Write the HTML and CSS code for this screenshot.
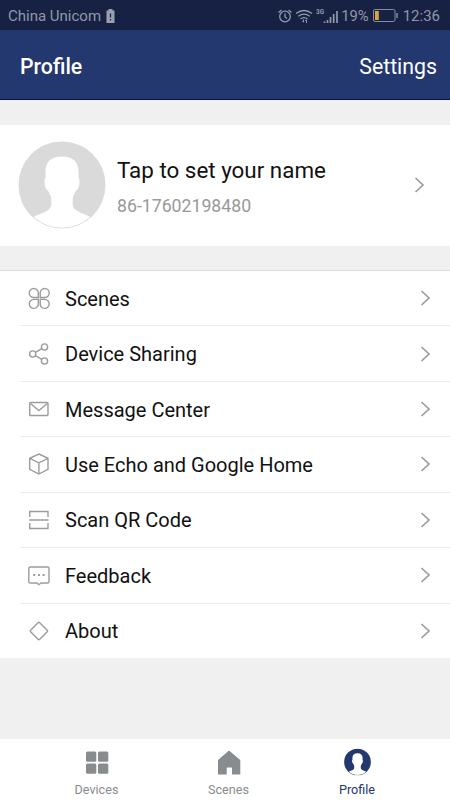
FILE: index.html
```html
<!DOCTYPE html>
<html lang="en">
<head>
  <meta charset="UTF-8">
  <meta name="viewport" content="width=device-width, initial-scale=1">
  <title>Profile</title>
  <link rel="stylesheet" href="styles.css">
</head>
<body>
  <!-- shared shapes -->
  <svg class="defs" width="0" height="0">
    <symbol id="person" viewBox="0 0 88 88">
      <circle cx="44" cy="44" r="43.5" fill="currentColor"/>
      <path fill="#fff" d="M44 15.500C33 15.500 28 21 27.500 29.500V37C25.500 38 26.500 48 30 49.500C31 52 33 55 33.300 57V63C33.300 71 22 72 15.800 76A42.700 42.700 0 0 0 72.200 76C66 72 54.700 71 54.700 63V57C55 55 57 52 58 49.500C61.500 48 62.500 38 60.500 37V29.500C60 21 55 15.500 44 15.500Z"/>
    </symbol>
    <symbol id="chevron" viewBox="0 0 12 18">
      <path d="M1.500 2L9 9L1.500 16" fill="none" stroke="#9c9c9c" stroke-width="1.700"/>
    </symbol>
  </svg>

  <div class="status-bar">
    <span class="carrier">China Unicom</span>
    <svg class="sim-icon" width="9" height="14" viewBox="0 0 9 14">
      <path d="M2.500 0H6.500V1.500H8.500V14H0.500V1.500H2.500Z" fill="#9a9fb0"/>
      <path d="M4.500 4.500V8.500M4.500 10V11.500" stroke="#17234a" stroke-width="1.300"/>
    </svg>
    <div class="status-right">
      <svg width="62" height="18" viewBox="0 0 62 18" fill="none" stroke="#9398aa" stroke-width="1.300">
        <circle cx="8" cy="9.500" r="5.300"/>
        <path d="M8 6.500V10L10 11.500M1.500 5.500L4.500 3M11.500 3L14.500 5.500"/>
        <path d="M19 6.500Q27 0.500 35 6.500M21.300 9.300Q27 5 32.700 9.300M23.500 12Q27 9.200 30.500 12"/>
        <path d="M26.500 12.500V15M25.300 14L26.500 15.300M29.500 16V13M28.300 14L29.500 12.700" stroke-width="1"/>
        <path stroke-width="1.700" d="M47.500 16V14.500M50.500 16V13M53.500 16V10M56.700 16V7M60 16V4"/>
      </svg>
      <span class="network">3G</span>
      <span class="percent">19%</span>
      <svg class="battery" width="26" height="13" viewBox="0 0 26 13">
        <rect x="0.500" y="0.500" width="21.500" height="12" rx="1.500" fill="none" stroke="#858b9f"/>
        <rect x="2" y="2" width="3.800" height="9" fill="#d9a53c"/>
        <path d="M24 4V9" stroke="#858b9f" stroke-width="1.500"/>
      </svg>
      <span class="clock">12:36</span>
    </div>
  </div>

  <div class="header">
    <h1>Profile</h1>
    <a class="settings">Settings</a>
  </div>

  <div class="user-card">
    <svg class="avatar" width="88" height="88"><use href="#person"/></svg>
    <div class="user-info">
      <div class="user-name"><span>Tap to set your name</span></div>
      <div class="user-phone"><span>86-17602198480</span></div>
    </div>
    <svg class="arrow" width="12" height="18"><use href="#chevron"/></svg>
  </div>

  <ul class="menu">
    <li>
      <svg class="icon" viewBox="0 0 24 24">
        <path d="M11.300 11.500V7A4.500 4.500 0 1 0 6.800 11.500ZM13.200 11.500V7A4.500 4.500 0 1 1 17.700 11.500ZM11.300 13.400V17.500A4.500 4.500 0 1 1 6.800 13.400ZM13.200 13.400V17.500A4.500 4.500 0 1 0 17.700 13.400Z"/>
      </svg>
      <span class="label">Scenes</span>
      <svg class="arrow" width="12" height="18"><use href="#chevron"/></svg>
    </li>
    <li>
      <svg class="icon" viewBox="0 0 24 24">
        <circle cx="5.700" cy="12" r="3.100"/><circle cx="17.500" cy="5" r="3.100"/><circle cx="17.500" cy="19" r="3.100"/>
        <path d="M8.400 10.400L14.800 6.600M8.400 13.600L14.800 17.400"/>
      </svg>
      <span class="label">Device Sharing</span>
      <svg class="arrow" width="12" height="18"><use href="#chevron"/></svg>
    </li>
    <li>
      <svg class="icon" viewBox="0 0 24 24">
        <rect x="2.700" y="5.500" width="18.300" height="13" rx="1"/>
        <path d="M3.500 6.500L11.900 13.500L20.300 6.500"/>
      </svg>
      <span class="label">Message Center</span>
      <svg class="arrow" width="12" height="18"><use href="#chevron"/></svg>
    </li>
    <li>
      <svg class="icon" viewBox="0 0 24 24">
        <path d="M11.900 2L21 6.300V17.300L11.900 22L2.700 17.300V6.300ZM2.700 6.300L11.900 10.800L21 6.300M11.900 10.800V22"/>
      </svg>
      <span class="label">Use Echo and Google Home</span>
      <svg class="arrow" width="12" height="18"><use href="#chevron"/></svg>
    </li>
    <li>
      <svg class="icon" viewBox="0 0 24 24">
        <path d="M2.700 9V3.500H21V9M2.700 15V20.500H21V15M2.200 12H21.500"/>
      </svg>
      <span class="label">Scan QR Code</span>
      <svg class="arrow" width="12" height="18"><use href="#chevron"/></svg>
    </li>
    <li>
      <svg class="icon" viewBox="0 0 24 24">
        <path d="M3.400 4H20.400Q22 4 22 5.600V18.400Q22 20 20.400 20H14L11.900 21.700L9.800 20H3.400Q1.800 20 1.800 18.400V5.600Q1.800 4 3.400 4Z"/>
        <path d="M6.200 12H8.200M10.900 12H12.900M15.600 12H17.600" stroke-width="2"/>
      </svg>
      <span class="label">Feedback</span>
      <svg class="arrow" width="12" height="18"><use href="#chevron"/></svg>
    </li>
    <li>
      <svg class="icon" viewBox="0 0 24 24">
        <rect x="5.400" y="5.500" width="13" height="13" rx="1.200" transform="rotate(45 11.900 12)"/>
      </svg>
      <span class="label">About</span>
      <svg class="arrow" width="12" height="18"><use href="#chevron"/></svg>
    </li>
  </ul>

  <div class="tab-bar">
    <a class="tab">
      <svg width="26" height="28" viewBox="0 0 26 28" fill="currentColor">
        <rect x="2" y="3.500" width="10.300" height="10.300" rx="1.500"/><rect x="14" y="3.500" width="10.300" height="10.300" rx="1.500"/>
        <rect x="2" y="15.500" width="10.300" height="10.300" rx="1.500"/><rect x="14" y="15.500" width="10.300" height="10.300" rx="1.500"/>
      </svg>
      <span>Devices</span>
    </a>
    <a class="tab">
      <svg width="26" height="28" viewBox="0 0 26 28" fill="currentColor">
        <path d="M13 2.500L24.300 12V26Q24.300 26.500 23.800 26.500H16V20Q16 19.500 15.500 19.500H11.200Q10.700 19.500 10.700 20V26.500H2.500Q2 26.500 2 26V12Z"/>
      </svg>
      <span>Scenes</span>
    </a>
    <a class="tab active">
      <svg width="27" height="28" viewBox="0 0 27 28"><use href="#person" x="0" y="0.500" width="27" height="27"/></svg>
      <span>Profile</span>
    </a>
  </div>
</body>
</html>
```
FILE: styles.css
```css
* {
  box-sizing: border-box;
}

body {
  margin: 0;
  height: 800px;
  display: flex;
  flex-direction: column;
  overflow: hidden;
  font-family: Roboto, "Liberation Sans", sans-serif;
  background-color: #f0f0f0;
  color: #111;
  white-space: nowrap;
}

svg {
  display: block;
  flex-shrink: 0;
}

.defs {
  position: absolute;
}

/* status bar */
.status-bar {
  height: 30px;
  display: flex;
  align-items: center;
  padding: 1px 10px 0 8px;
  background-color: #162144;
  color: #9297a8;
  font-size: 15px;
}

.carrier {
  font-size: 15px;
}

.sim-icon {
  margin-left: 5px;
}

.status-right {
  margin-left: auto;
  display: flex;
  align-items: center;
  position: relative;
}

.network {
  position: absolute;
  left: 39px;
  top: 0;
  font-size: 8px;
  line-height: 9px;
  font-weight: bold;
  transform: scaleX(0.8);
  transform-origin: left;
}

.percent {
  margin-left: 2px;
  font-size: 14.8px;
}

.battery {
  margin: 0 4px;
}

.clock {
  font-size: 15px;
}

/* title bar */
.header {
  height: 70px;
  display: flex;
  justify-content: space-between;
  align-items: center;
  padding: 3px 13px 0 20px;
  background-color: #22386f;
  border-bottom: 1px solid #07114a;
  color: #fff;
}

.header h1 {
  margin: 0;
  font-size: 21.3px;
  font-weight: 500;
}

.settings {
  font-size: 21.3px;
}

/* user card */
.user-card {
  height: 121px;
  margin-top: 25px;
  display: flex;
  align-items: center;
  padding: 0 24px 1px 18px;
  background-color: #fff;
}

.avatar {
  color: #dadada;
}

.user-info {
  flex: 1;
  padding: 2px 0 0 11px;
}

.user-name {
  font-size: 22.4px;
  line-height: 28px;
}

.user-phone {
  margin-top: 11px;
  font-size: 17.7px;
  line-height: 22px;
  color: #999;
}

/* menu list */
.menu {
  list-style: none;
  margin: 24px 0 0;
  padding: 0;
  height: 388px;
  display: flex;
  flex-direction: column;
  background-color: #fff;
  border-top: 1px solid #dcdcdc;
}

.menu li {
  flex: 1;
  display: flex;
  align-items: center;
  margin-left: 20px;
  padding-right: 18px;
  border-bottom: 1px solid #ececec;
}

.menu li:last-child {
  border-bottom: none;
}

.icon {
  width: 24px;
  height: 24px;
  margin-left: 7px;
  fill: none;
  stroke: #9c9c9c;
  stroke-width: 1.4;
}

.label {
  flex: 1;
  padding: 1px 0 0 14px;
  font-size: 20px;
}

/* bottom tabs */
.tab-bar {
  height: 61px;
  margin-top: auto;
  display: grid;
  grid-template-columns: 131px 133px 124px;
  padding: 9px 31px 0;
  background-color: #fff;
}

.tab {
  display: flex;
  flex-direction: column;
  align-items: center;
  font-size: 12.6px;
  color: #888c8f;
}

.tab span {
  margin-top: 6px;
  line-height: 15px;
}

.tab.active {
  color: #22386f;
}
```
